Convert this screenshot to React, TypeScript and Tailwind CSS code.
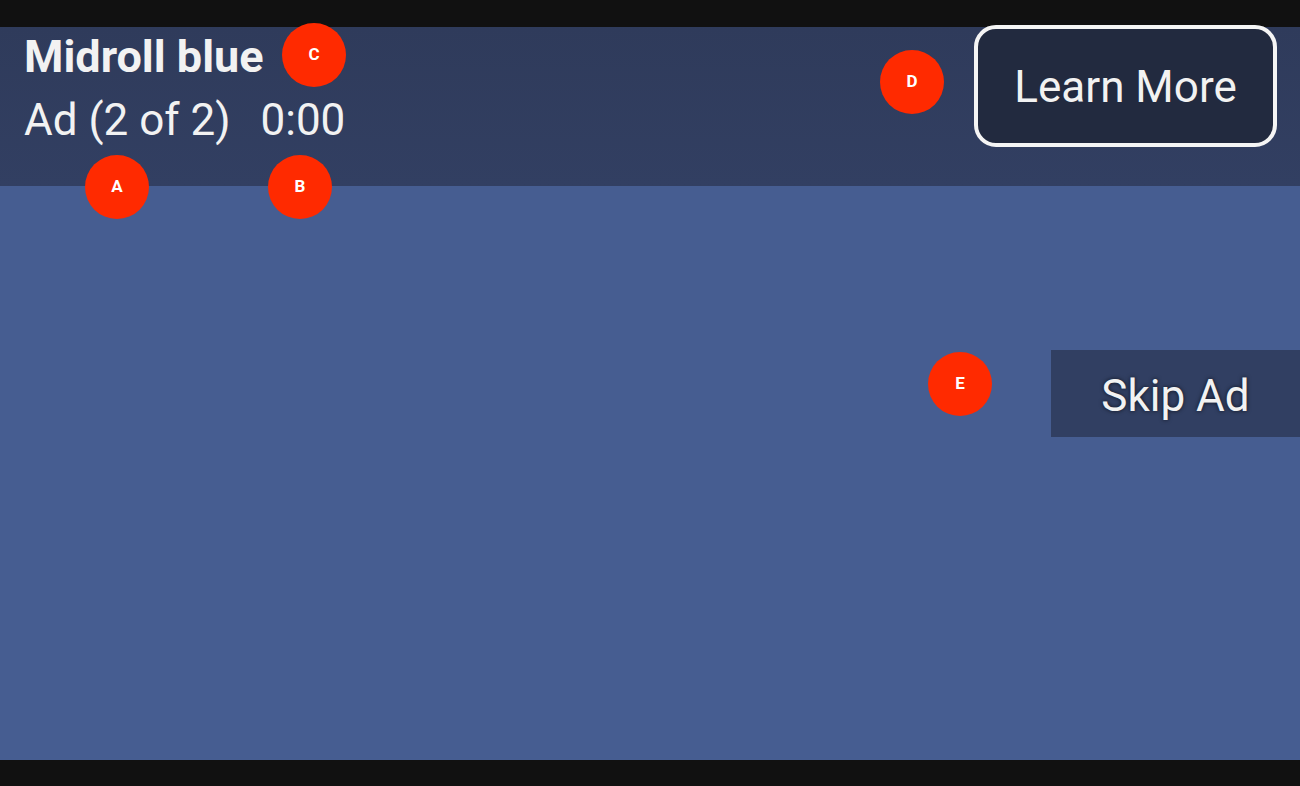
const font = { fontFamily: 'Roboto, "Noto Sans", sans-serif' }

function Marker({ label, x, y }: { label: string; x: number; y: number }) {
  return (
    <div
      className="absolute flex h-[64px] w-[64px] -translate-x-1/2 -translate-y-1/2 items-center justify-center rounded-full bg-[#ff2a00] text-[17px] font-bold text-white"
      style={{ left: x, top: y }}
    >
      {label}
    </div>
  )
}

export default function App() {
  return (
    <div className="relative flex h-[786px] w-[1300px] flex-col overflow-hidden bg-[#111111]" style={font}>
      <div className="h-[27px] shrink-0" />
      <div className="flex flex-1 flex-col bg-[#465d91]">
        {/* Ad header */}
        <div className="flex h-[159px] shrink-0 items-start justify-between bg-gradient-to-b from-[#2f3b5b] to-[#323f62] pl-[24px] pr-[23px]">
          <div className="pt-[4px] text-[#f2f2f2]">
            <div className="text-[45px] font-bold leading-[52px]">Midroll blue</div>
            <div className="mt-[11px] flex gap-[30px] text-[44px] font-normal leading-[52px]">
              <span>Ad (2 of 2)</span>
              <span>0:00</span>
            </div>
          </div>
          <button className="-mt-[2px] flex h-[122px] w-[303px] items-center justify-center rounded-[22px] border-[4px] border-[#f5f5f5] bg-[#222a3f] pt-[2px] text-[44px] text-[#f2f2f2]">
            Learn More
          </button>
        </div>

        {/* Video area */}
        <div className="flex flex-1 flex-col items-end pt-[164px]">
          <button
            className="flex h-[87px] w-[249px] items-center justify-center bg-[#313f62] pt-[4px] text-[44px] text-[#f2f2f2]"
            style={{ textShadow: '0 0 4px rgba(0,0,0,0.7)' }}
          >
            Skip Ad
          </button>
        </div>
      </div>
      <div className="h-[26px] shrink-0" />

      <Marker label="A" x={117} y={187} />
      <Marker label="B" x={300} y={187} />
      <Marker label="C" x={314} y={55} />
      <Marker label="D" x={912} y={82} />
      <Marker label="E" x={960} y={384} />
    </div>
  )
}
